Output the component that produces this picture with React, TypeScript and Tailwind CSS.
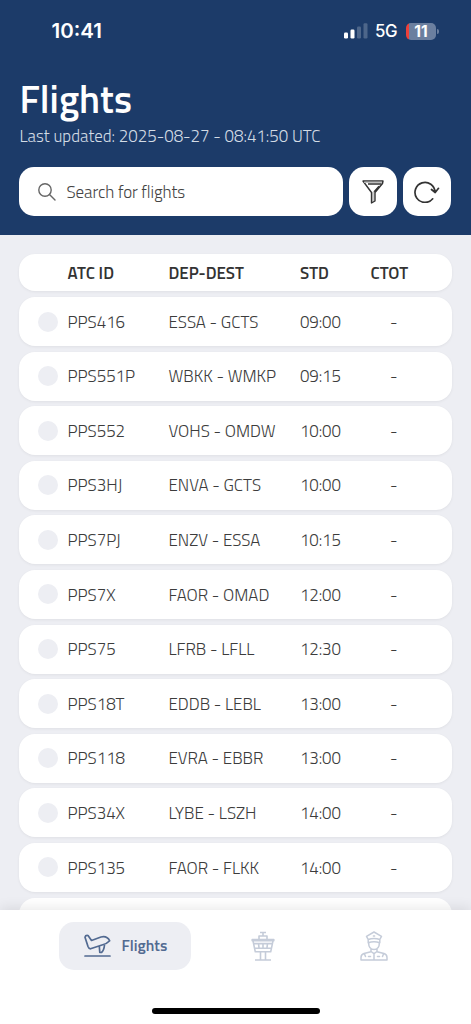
import React from "react";

type Flight = { id: string; route: string; std: string };

const flights: Flight[] = [
  { id: "PPS416", route: "ESSA - GCTS", std: "09:00" },
  { id: "PPS551P", route: "WBKK - WMKP", std: "09:15" },
  { id: "PPS552", route: "VOHS - OMDW", std: "10:00" },
  { id: "PPS3HJ", route: "ENVA - GCTS", std: "10:00" },
  { id: "PPS7PJ", route: "ENZV - ESSA", std: "10:15" },
  { id: "PPS7X", route: "FAOR - OMAD", std: "12:00" },
  { id: "PPS75", route: "LFRB - LFLL", std: "12:30" },
  { id: "PPS18T", route: "EDDB - LEBL", std: "13:00" },
  { id: "PPS118", route: "EVRA - EBBR", std: "13:00" },
  { id: "PPS34X", route: "LYBE - LSZH", std: "14:00" },
  { id: "PPS135", route: "FAOR - FLKK", std: "14:00" },
];

function StatusBar() {
  return (
    <div className="flex h-[62px] items-center pl-[51.5px] pr-[32px] font-['Inter',sans-serif] text-white">
      <span className="pt-[1px] text-[20.5px] font-semibold leading-none tracking-[0px]">10:41</span>
      <svg className="ml-auto" width="24" height="16" viewBox="0 0 24 16" fill="#fff">
        <rect x="0" y="9.5" width="4" height="6" rx="1.2" />
        <rect x="6.5" y="6.500" width="4" height="9" rx="1.2" />
        <rect x="13" y="3.500" width="4" height="12" rx="1.2" opacity=".22" />
        <rect x="19.5" y="0.300" width="4" height="15.200" rx="1.2" opacity=".22" />
      </svg>
      <span className="ml-[7px] w-[23px] pt-[1px] text-[16.8px] font-medium leading-none tracking-[-0.3px]">5G</span>
      <div className="ml-[8px] flex h-[17px] w-[30px] items-center justify-center overflow-hidden rounded-[5px] bg-[linear-gradient(90deg,#ee4039_3px,#6b7f9f_3px)] pt-[1px] text-[15.5px] font-bold leading-none">
        11
      </div>
      <div className="ml-[1px] h-[5px] w-[2px] rounded-r-full bg-[#6b7f9f]" />
    </div>
  );
}

function TowerIcon() {
  return (
    <svg width="24" height="30" viewBox="0 0 24 30" fill="none" stroke="#c5ccd9" strokeWidth="1.6" strokeLinejoin="round">
      <path d="M9 1.500h6M12 1.500V5M8 8.500V5h8v3.500M1.200 8.500h21.600v1.300H1.200zM2 9.800l2.300 11h15.400L22 9.800M2.800 12.600h18.400M3.700 17.300h16.600M7.500 12.600l.6 4.700M12 12.600v4.700M16.500 12.600l-.6 4.700M9.500 21v8M14.500 21v8M4 29h16" />
    </svg>
  );
}

function PilotIcon() {
  return (
    <svg width="28" height="30" viewBox="0 0 28 30" fill="none" stroke="#c5ccd9" strokeWidth="1.5" strokeLinejoin="round" strokeLinecap="round">
      <path d="M8.200 8.500 6.500 5.300 14 1l7.500 4.300-1.700 3.200M8.200 8.500q5.800-2 11.600 0v3.200q-5.800-1.800-11.600 0zM8.600 12q.2 6.500 5.400 6.500t5.400-6.500M13.400 5h1.200M11 17.500v3l3 2.200 3-2.200v-3M11 20.700l-7 1.800q-3 1-3 4V29h26v-2.500q0-3-3-4l-7-1.800M14 22.700V29M8.500 25.500h2M17.500 25.500h2M4.500 23l1 2.500M23.500 23l-1 2.500" />
    </svg>
  );
}

export default function App() {
  return (
    <div className="flex h-[1024px] w-[471px] flex-col overflow-hidden bg-[#edeef3] font-['Titillium_Web','Roboto',sans-serif] text-[#444]">
      <header className="h-[235px] shrink-0 bg-[#1c3b69]">
        <StatusBar />
        <div className="px-[19px]">
          <h1 className="mt-[15px] h-[43px] pl-[0.5px] text-[38.5px] font-semibold leading-[43px] text-white">Flights</h1>
          <p className="mt-[6px] h-[20px] whitespace-nowrap pl-[0.5px] text-[16.9px] font-light leading-[20px] text-[#d3dbe5]">Last updated: 2025-08-27 - 08:41:50 UTC</p>
          <div className="mt-[21px] flex h-[49px]">
            <div className="flex w-[324px] items-center rounded-[15px] bg-white pl-[19px]">
              <svg width="18" height="18" viewBox="0 0 18 18" fill="none" stroke="#666" strokeWidth="1.4" strokeLinecap="round">
                <circle cx="7" cy="7" r="6.200" />
                <path d="m11.500 11.500 5.500 5.500" />
              </svg>
              <span className="ml-[10.5px] pt-[2px] text-[17px] font-light tracking-[-0.08px] text-[#444]">Search for flights</span>
            </div>
            <button className="ml-[6px] flex w-[48px] items-center justify-center rounded-[15px] bg-white" aria-label="Filter">
              <svg width="22" height="24" viewBox="0 0 22 24" fill="none" stroke="#333" strokeWidth="1.400" strokeLinejoin="round">
                <path d="M19.500 3.200 12.500 12v9L9.500 23V13" fill="#ccc" stroke="none" />
                <path d="M1 1h20l-.5 2.500L13 12.500V21l-3.500 2V12.500z" />
                <path d="M2 2.300h18" stroke="#bbb" strokeWidth="1.300" />
                <path d="M6 4h13.500M17 6.200l-4.700 5.600" />
              </svg>
            </button>
            <button className="ml-[6px] flex w-[48px] items-center justify-center rounded-[15px] bg-white" aria-label="Refresh">
              <svg width="26" height="22" viewBox="0 0 26 22" fill="none" stroke="#333" strokeWidth="1.700" strokeLinecap="round" strokeLinejoin="round">
                <path d="M18.700 17.800A10 10 0 1 1 21 11.200M17.500 8.500l3.700 3 3.300-4.200" />
              </svg>
            </button>
          </div>
        </div>
      </header>

      <main className="min-h-0 flex-1 overflow-hidden px-[19px] pt-[19px]">
        <div className="grid h-[37px] grid-cols-[101px_131.5px_70.5px_1fr] items-center rounded-[16px] bg-white pl-[48.5px] pt-[2px] text-[16.9px] font-semibold leading-none text-[#333] shadow-[0_1px_3px_#0000000f]">
          <span>ATC ID</span>
          <span>DEP-DEST</span>
          <span>STD</span>
          <span>CTOT</span>
        </div>
        <div className="mt-[6px] flex flex-col gap-[5.600px]">
          {flights.map((f) => (
            <div key={f.id} className="grid h-[49px] shrink-0 grid-cols-[29.5px_101px_131.5px_90px_1fr] items-center rounded-[16px] bg-white pl-[19px] text-[16.9px] font-light text-[#3c3c3c] shadow-[0_1px_3px_#0000000f]">
              <span className="h-[20px] w-[20px] rounded-full bg-[#edeef3]" />
              <span className="pt-[1.5px]">{f.id}</span>
              <span className="whitespace-nowrap pt-[1.5px]">{f.route}</span>
              <span className="pt-[1.5px] tracking-[-0.1px]">{f.std}</span>
              <span className="pt-[1.5px]">-</span>
            </div>
          ))}
          <div className="h-[49px] shrink-0 rounded-[16px] bg-white" />
        </div>
      </main>

      <nav className="relative flex h-[114px] shrink-0 flex-col bg-white shadow-[0_-2px_12px_#00000018]">
        <div className="flex pl-[59px] pt-[12px]">
          <div className="flex h-[48px] w-[132px] items-center rounded-[15px] bg-[#edeef3] pl-[25px] text-[#526a91]">
            <svg width="27" height="24" viewBox="0 0 27 24" fill="none" stroke="currentColor" strokeWidth="1.700" strokeLinecap="round" strokeLinejoin="round">
              <path d="M1 3.200Q1.500 1 4 1.500L7.500 6.500 17 3q6-1.500 8.700 3.800Q23 9.800 18 11L6.500 14.800Q4.800 14.800 4 12.500zM15.300 12.200l.5 6.300 1.700 0q2.500-2 3-7.500M1 22h25" />
            </svg>
            <span className="ml-[10.5px] pb-[2px] text-[15.7px] font-semibold leading-[22px]">Flights</span>
          </div>
          <div className="ml-[60px] flex h-[48px] items-center"><TowerIcon /></div>
          <div className="ml-[85px] flex h-[48px] items-center"><PilotIcon /></div>
        </div>
        <div className="mx-auto mt-[38px] h-[6px] w-[168px] rounded-full bg-black" />
      </nav>
    </div>
  );
}
